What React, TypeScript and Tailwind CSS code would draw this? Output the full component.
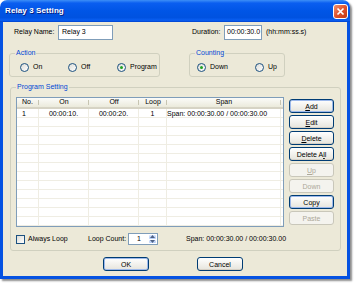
import React from "react";

function Radio({ checked, label, w }: { checked?: boolean; label: string; w: string }) {
  return (
    <div className={`flex items-center gap-[4px] ${w}`}>
      <div className="w-[9px] h-[9px] rounded-full border border-[#1c5180] bg-gradient-to-br from-[#dcdcd7] to-white flex items-center justify-center">
        {checked && <div className="w-[3px] h-[3px] rounded-full bg-[#21a121]" />}
      </div>
      <span>{label}</span>
    </div>
  );
}

function Btn({
  children,
  disabled,
  def,
  w = "w-[45px]",
}: {
  children: React.ReactNode;
  disabled?: boolean;
  def?: boolean;
  w?: string;
}) {
  const base = `${w} h-[14px] rounded-[3px] border flex items-center justify-center leading-none`;
  if (disabled)
    return <div className={`${base} border-[#c9c7ba] bg-[#f4f3ee] text-[#aca899]`}>{children}</div>;
  return (
    <div
      className={`${base} border-[#003c74] bg-gradient-to-b from-white to-[#e6e4dc] text-black ${
        def ? "shadow-[inset_0_0_0_1px_#9db9eb]" : "shadow-[inset_0_-1px_0_#d6d0c5]"
      }`}
    >
      {children}
    </div>
  );
}

function GroupBox({
  title,
  className,
  children,
}: {
  title: string;
  className: string;
  children?: React.ReactNode;
}) {
  return (
    <div className={`relative border border-[#d0d0bf] rounded-[3px] ${className}`}>
      <span className="absolute -top-[5px] left-[5px] bg-[#ece9d8] px-[1px] leading-none text-[#0046d5]">
        {title}
      </span>
      {children}
    </div>
  );
}

const cols = [
  { w: "w-[22px]", label: "No.", align: "justify-start pl-[5px]" },
  { w: "w-[50px]", label: "On", align: "justify-center" },
  { w: "w-[50px]", label: "Off", align: "justify-center" },
  { w: "w-[28px]", label: "Loop", align: "justify-center" },
  { w: "w-[114px]", label: "Span", align: "justify-center" },
];

export default function App() {
  const rows = Array.from({ length: 13 });
  return (
    <div className="w-[354px] h-[283px] bg-white font-['Liberation_Sans',Arial,sans-serif] text-[7px] text-black">
      <div className="w-[350px] h-[279px] flex flex-col rounded-t-[7px] shadow-[2px_2px_2px_rgba(0,0,0,0.45)]">
        {/* Title bar */}
        <div className="h-[22px] rounded-t-[7px] bg-[linear-gradient(to_bottom,#3d8ff7_0%,#0a5ef0_14%,#0055e6_50%,#0052e0_80%,#0a5ff2_92%,#0042cc_100%)] flex items-center justify-between pl-[5px] pr-[2px]">
          <span className="text-white font-bold text-[8px] tracking-[0.1px] [text-shadow:1px_1px_0_#0a1e80]">
            Relay 3 Setting
          </span>
          <div className="w-[15px] h-[15px] rounded-[3px] border border-white bg-gradient-to-br from-[#f0906c] via-[#e0522c] to-[#c2380f] flex items-center justify-center">
            <svg width="9" height="9" viewBox="0 0 9 9">
              <path d="M1.5 1.5 L7.5 7.5 M7.5 1.5 L1.5 7.5" stroke="white" strokeWidth="1.7" />
            </svg>
          </div>
        </div>
        {/* Body */}
        <div className="flex-1 bg-[#ece9d8] border-x-[3px] border-b-[3px] border-[#0552e2] flex flex-col">
          {/* Row 1 */}
          <div className="mt-[3px] h-[15px] flex items-center">
            <span className="ml-[11px] w-[44px]">Relay Name:</span>
            <div className="w-[55px] h-[15px] border border-[#7f9db9] bg-white flex items-center pl-[3px]">
              Relay 3
            </div>
            <span className="ml-[79px] w-[32px]">Duration:</span>
            <div className="w-[38px] h-[15px] border border-[#7f9db9] bg-white flex items-center pl-[2px]">
              00:00:30.0
            </div>
            <span className="ml-[4px]">(hh:mm:ss.s)</span>
          </div>
          {/* Row 2 */}
          <div className="mt-[13px] flex">
            <GroupBox title="Action" className="ml-[6px] w-[151px] h-[24px] flex items-center pl-[10px] pt-[4px]">
              <Radio label="On" w="w-[48px]" />
              <Radio label="Off" w="w-[49px]" />
              <Radio label="Program" checked w="" />
            </GroupBox>
            <GroupBox title="Counting" className="ml-[29px] w-[96px] h-[24px] flex items-center pl-[7px] pt-[4px]">
              <Radio label="Down" checked w="w-[58px]" />
              <Radio label="Up" w="" />
            </GroupBox>
          </div>
          {/* Program setting */}
          <GroupBox title="Program Setting" className="mt-[10px] ml-[7px] w-[331px] h-[164px] flex flex-col">
            <div className="mt-[9px] ml-[5px] flex">
              {/* List */}
              <div className="w-[268px] h-[130px] border border-[#7f9db9] bg-white flex flex-col overflow-hidden">
                <div className="h-[11px] flex bg-gradient-to-b from-[#fbfbf9] to-[#ebeadb] border-b-[2px] border-[#d6d3c4] shrink-0">
                  {cols.map((c, i) => (
                    <div key={i} className={`${c.w} flex items-center ${c.align} relative`}>
                      {c.label}
                      <div className="absolute right-0 top-[2px] bottom-[2px] w-px bg-[#c7c5b2]" />
                    </div>
                  ))}
                  <div className="flex-1" />
                </div>
                {rows.map((_, r) => (
                  <div key={r} className="h-[9px] flex border-b border-[#efede3] shrink-0">
                    {cols.map((c, i) => (
                      <div
                        key={i}
                        className={`${c.w} border-r border-[#efede3] flex items-center leading-none ${
                          i === 0 ? "pl-[5px]" : i === 4 ? "pl-[0px] whitespace-nowrap" : "justify-center"
                        }`}
                      >
                        {r === 0 ? ["1", "00:00:10.", "00:00:20.", "1", "Span: 00:00:30.00 / 00:00:30.00"][i] : ""}
                      </div>
                    ))}
                  </div>
                ))}
              </div>
              {/* Buttons */}
              <div className="ml-[5px] mt-[2px] flex flex-col gap-[2px]">
                <Btn def>
                  <span><u>A</u>dd</span>
                </Btn>
                <Btn>
                  <span><u>E</u>dit</span>
                </Btn>
                <Btn>
                  <span><u>D</u>elete</span>
                </Btn>
                <Btn>
                  <span>Delete A<u>l</u>l</span>
                </Btn>
                <Btn disabled>
                  <span><u>U</u>p</span>
                </Btn>
                <Btn disabled>
                  <span>Down</span>
                </Btn>
                <Btn def>
                  <span>Copy</span>
                </Btn>
                <Btn disabled>
                  <span>Paste</span>
                </Btn>
              </div>
            </div>
            {/* bottom row */}
            <div className="mt-[6px] ml-[5px] h-[12px] flex items-center">
              <div className="w-[9px] h-[9px] border border-[#1c5180] bg-gradient-to-br from-[#dcdcd7] to-white" />
              <span className="ml-[3px] w-[60px]">Always Loop</span>
              <span className="w-[40px]">Loop Count:</span>
              <div className="w-[30px] h-[12px] border border-[#7f9db9] bg-white flex">
                <span className="flex-1 pl-[8px] flex items-center">1</span>
                <div className="w-[9px] flex flex-col gap-px p-px">
                  <div className="flex-1 rounded-[1px] bg-gradient-to-b from-[#d9e6fe] to-[#b4ccf7] flex items-center justify-center">
                    <svg width="5" height="3" viewBox="0 0 5 3"><path d="M0 3 L2.5 0 L5 3Z" fill="#4d6185" /></svg>
                  </div>
                  <div className="flex-1 rounded-[1px] bg-gradient-to-b from-[#d9e6fe] to-[#b4ccf7] flex items-center justify-center">
                    <svg width="5" height="3" viewBox="0 0 5 3"><path d="M0 0 L2.5 3 L5 0Z" fill="#4d6185" /></svg>
                  </div>
                </div>
              </div>
              <span className="ml-[28px] whitespace-nowrap">Span: 00:00:30.00 / 00:00:30.00</span>
            </div>
          </GroupBox>
          {/* OK / Cancel */}
          <div className="mt-[6px] flex">
            <div className="ml-[100px]">
              <Btn w="w-[46px]" def>
                <span>OK</span>
              </Btn>
            </div>
            <div className="ml-[48px]">
              <Btn w="w-[46px]">
                <span>Cancel</span>
              </Btn>
            </div>
          </div>
        </div>
      </div>
    </div>
  );
}
